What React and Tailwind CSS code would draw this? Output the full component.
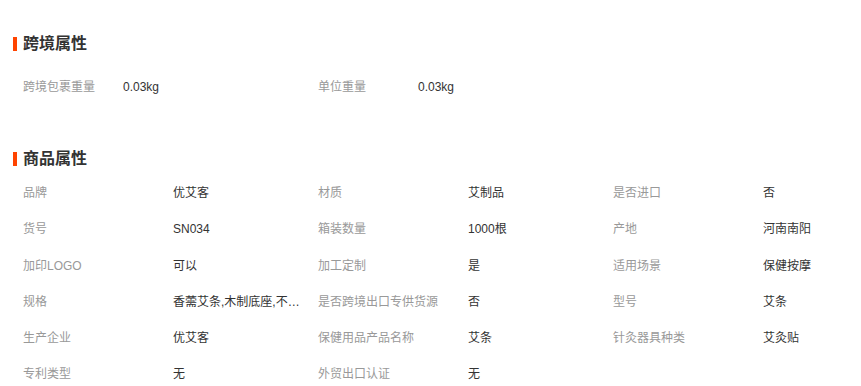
import React from 'react';

const crossBorder = [
    { label: '跨境包裹重量', value: '0.03kg' },
    { label: '单位重量', value: '0.03kg' },
];

const productAttrs = [
    { label: '品牌', value: '优艾客' },
    { label: '材质', value: '艾制品' },
    { label: '是否进口', value: '否' },
    { label: '货号', value: 'SN034' },
    { label: '箱装数量', value: '1000根' },
    { label: '产地', value: '河南南阳' },
    { label: '加印LOGO', value: '可以' },
    { label: '加工定制', value: '是' },
    { label: '适用场景', value: '保健按摩' },
    { label: '规格', value: '香薷艾条,木制底座,不锈钢盒' },
    { label: '是否跨境出口专供货源', value: '否' },
    { label: '型号', value: '艾条' },
    { label: '生产企业', value: '优艾客' },
    { label: '保健用品产品名称', value: '艾条' },
    { label: '针灸器具种类', value: '艾灸贴' },
    { label: '专利类型', value: '无' },
    { label: '外贸出口认证', value: '无' },
];

function SectionTitle({ children }) {
    return (
        <div className="flex items-center h-[20px]">
            <div className="w-[4px] h-[14px] bg-[#ff4400] mr-[6px]"></div>
            <h3 className="text-[16px] font-bold text-[#333]">{children}</h3>
        </div>
    );
}

export default function App() {
    return (
        <div
            className="w-[861px] h-[386px] bg-white overflow-hidden pt-[34px] pl-[13px]"
            style={{ fontFamily: '"Liberation Sans", "Noto Sans CJK SC", sans-serif' }}
        >
            {/* 跨境属性 */}
            <SectionTitle>跨境属性</SectionTitle>
            <div className="mt-[15px] pl-[10px] flex text-[12px]">
                {crossBorder.map((item) => (
                    <div key={item.label} className="w-[295px] h-[36px] flex items-center">
                        <span className="w-[100px] text-[#999]">{item.label}</span>
                        <span className="text-[#333]">{item.value}</span>
                    </div>
                ))}
            </div>

            {/* 商品属性 */}
            <div className="mt-[44px]">
                <SectionTitle>商品属性</SectionTitle>
            </div>
            <div className="mt-[6px] pl-[10px] grid grid-cols-[295px_295px_240px] text-[12px]">
                {productAttrs.map((item) => (
                    <div key={item.label} className="h-[36.25px] flex items-center">
                        <span className="w-[150px] shrink-0 text-[#999] whitespace-nowrap">{item.label}</span>
                        <span className="w-[130px] text-[#333] truncate">{item.value}</span>
                    </div>
                ))}
            </div>
        </div>
    );
}
